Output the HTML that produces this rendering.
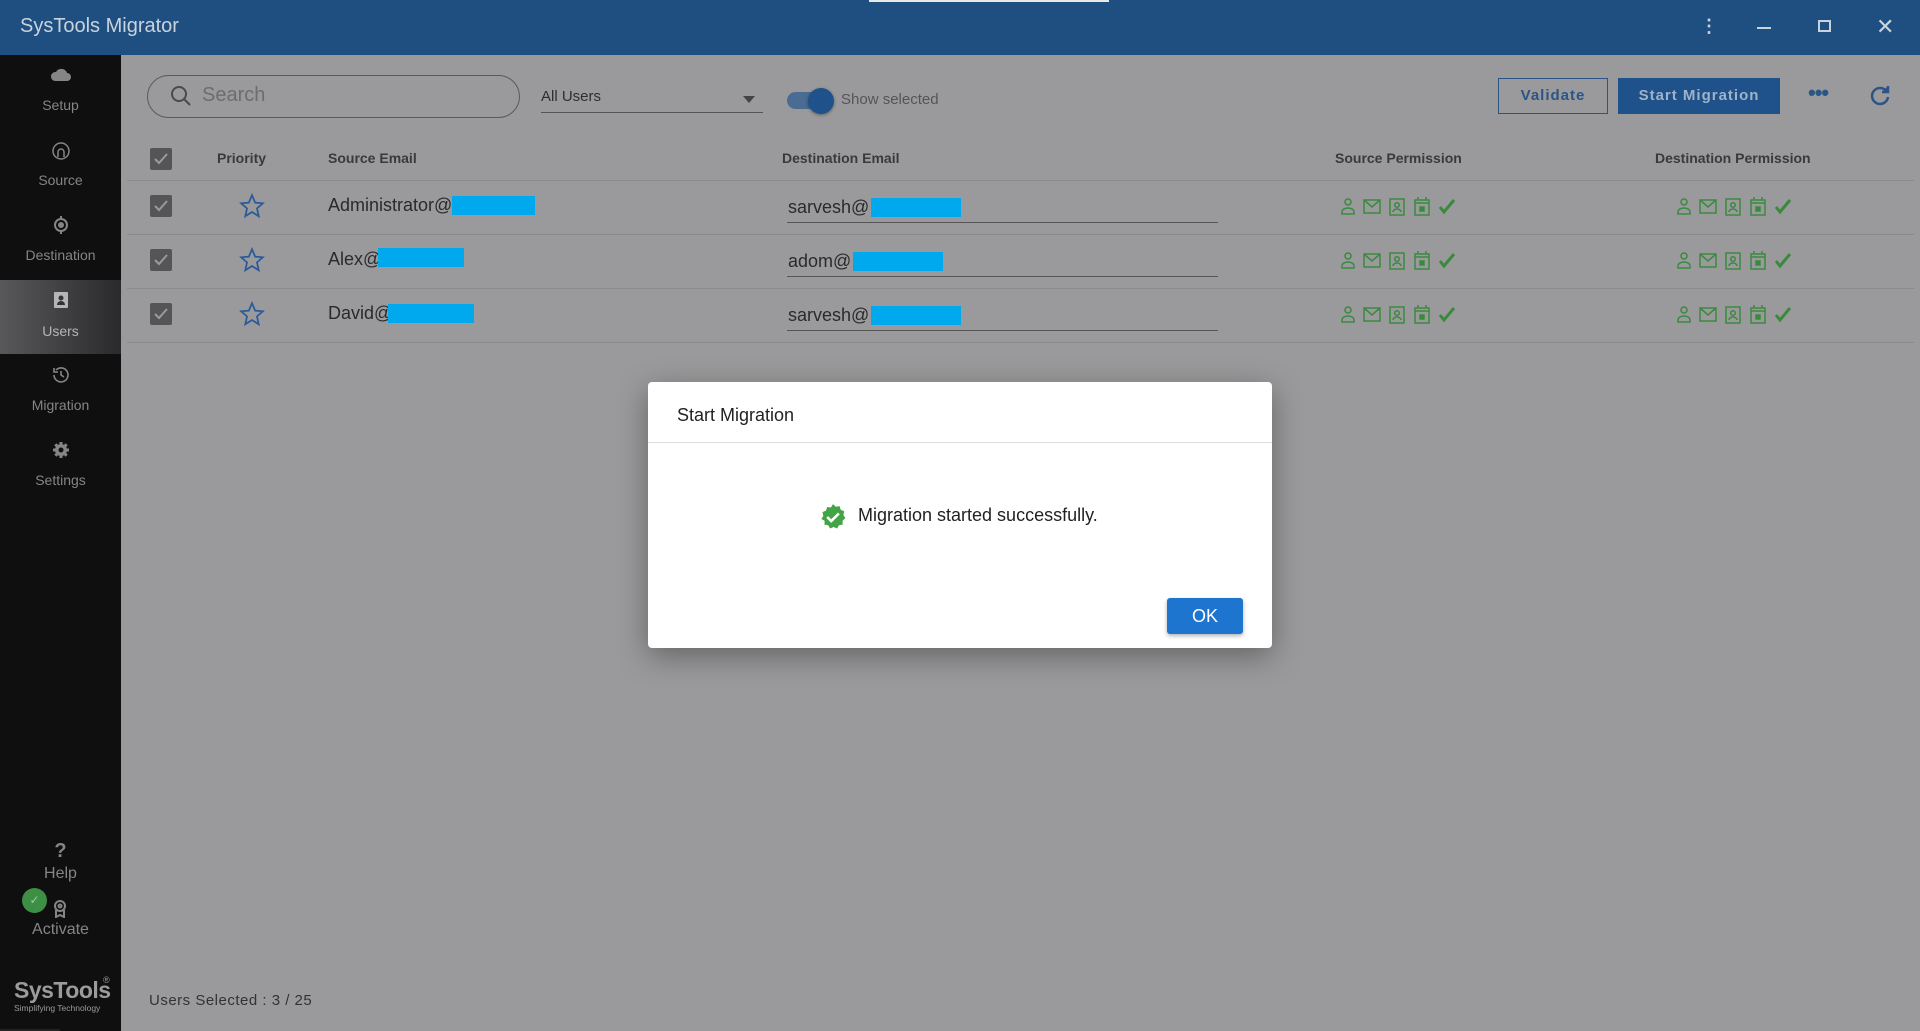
<!DOCTYPE html>
<html><head><meta charset="utf-8"><style>
*{margin:0;padding:0;box-sizing:border-box}
body{width:1920px;height:1031px;overflow:hidden;background:#9a999b;font-family:"Liberation Sans",sans-serif;position:relative;color:#2e2e30}
.abs{position:absolute}
#top{left:0;top:0;width:1920px;height:55px;background:#1f4e80}
#side{left:0;top:55px;width:121px;height:976px;background:#0f0f10}
.si{position:absolute;left:0;width:121px;text-align:center;color:#858587;font-size:14px}
.hdr{position:absolute;top:150px;font-size:14px;font-weight:bold;color:#3a3a3c}
.line{position:absolute;left:127px;width:1787px;height:1px;background:#8a898b}
.cb{position:absolute;left:150px;width:22px;height:22px;background:#555557;border-radius:2px}
.cb svg{position:absolute;left:3px;top:3px}
.em{position:absolute;font-size:18px;color:#2a2a2c}
.bl{position:absolute;background:#00a9ee;height:19px}
.ul{position:absolute;left:787px;width:431px;height:1px;background:#555}
</style></head><body>
<div id="top" class="abs"></div>
<div class="abs" style="left:869px;top:0;width:240px;height:2px;background:#e8e8e8"></div>
<div class="abs" style="left:20px;top:15px;font-size:20px;color:#c9d3de">SysTools Migrator</div>
<div class="abs" style="left:1700px;top:16px;color:#c9d3de;font-size:18px;font-weight:bold">⋮</div>
<div class="abs" style="left:1757px;top:27px;width:14px;height:2px;background:#c9d3de"></div>
<div class="abs" style="left:1818px;top:20px;width:13px;height:12px;border:2px solid #c9d3de"></div>
<div class="abs" style="left:1876px;top:14px;color:#c9d3de;font-size:22px">✕</div>

<div id="side" class="abs"></div>
<div class="abs" style="left:0;top:280px;width:121px;height:74px;background:linear-gradient(90deg,#58585a,#2a2a2c)"></div>
<div class="si" style="top:66px"><svg width="22" height="16" viewBox="0 0 22 16"><path d="M5 15h12a4 4 0 0 0 0-8 6 6 0 0 0-11-1 4.5 4.5 0 0 0-1 9z" fill="#858587"/></svg></div>
<div class="si" style="top:97px">Setup</div>
<div class="si" style="top:141px"><svg width="20" height="20" viewBox="0 0 20 20" fill="none" stroke="#858587" stroke-width="1.5"><circle cx="10" cy="10" r="8"/><path d="M7 16v-5a3 3 0 0 1 6 0v5"/></svg></div>
<div class="si" style="top:172px">Source</div>
<div class="si" style="top:215px"><svg width="20" height="20" viewBox="0 0 20 20"><circle cx="10" cy="10" r="6" fill="none" stroke="#858587" stroke-width="2"/><circle cx="10" cy="10" r="3" fill="#858587"/><path d="M10 1v3M10 16v3" stroke="#858587" stroke-width="2"/></svg></div>
<div class="si" style="top:247px">Destination</div>
<div class="si" style="top:291px"><svg width="16" height="18" viewBox="0 0 16 18"><rect x="1" y="1" width="14" height="16" rx="1" fill="#b5b5b7"/><circle cx="8" cy="7" r="2.5" fill="#333"/><path d="M4 14a4 4 0 0 1 8 0z" fill="#333"/></svg></div>
<div class="si" style="top:323px;color:#b5b5b7">Users</div>
<div class="si" style="top:365px"><svg width="20" height="20" viewBox="0 0 20 20" fill="none" stroke="#858587" stroke-width="1.6"><path d="M3 10a7 7 0 1 0 2-5"/><path d="M3 3v4h4"/><path d="M10 6v4l3 2"/></svg></div>
<div class="si" style="top:397px">Migration</div>
<div class="si" style="top:440px"><svg width="20" height="20" viewBox="0 0 20 20"><circle cx="10" cy="10" r="6" fill="#858587"/><path d="M10 2v16M2 10h16M4.3 4.3l11.4 11.4M15.7 4.3L4.3 15.7" stroke="#858587" stroke-width="3"/><circle cx="10" cy="10" r="2.5" fill="#0f0f10"/></svg></div>
<div class="si" style="top:472px">Settings</div>
<div class="si" style="top:840px;font-size:20px;font-weight:bold">?</div>
<div class="si" style="top:865px;font-size:16px">Help</div>
<div class="abs" style="left:22px;top:888px;width:25px;height:25px;border-radius:50%;background:#3d8f45;color:#9bd0a0;font-size:12px;text-align:center;line-height:25px">✓</div>
<div class="abs" style="left:53px;top:900px"><svg width="14" height="18" viewBox="0 0 14 18" fill="none" stroke="#858587" stroke-width="2"><circle cx="7" cy="6" r="5"/><circle cx="7" cy="6" r="1.5"/><path d="M3 10v7l4-2 4 2v-7"/></svg></div>
<div class="si" style="top:921px;font-size:16px">Activate</div>
<div class="abs" style="left:14px;top:977px;font-size:23px;font-weight:bold;color:#9b9b9d;letter-spacing:-0.5px">SysTools</div>
<div class="abs" style="left:103px;top:975px;font-size:9px;color:#9b9b9d">®</div>
<div class="abs" style="left:14px;top:1003px;font-size:8.5px;color:#9b9b9d">Simplifying Technology</div>

<div class="abs" style="left:147px;top:75px;width:373px;height:43px;border:1.5px solid #5a5a5c;border-radius:22px"></div>
<div class="abs" style="left:170px;top:85px"><svg width="22" height="22" viewBox="0 0 22 22" fill="none" stroke="#4a4a4c" stroke-width="2"><circle cx="9" cy="9" r="7"/><path d="M14 14l6 6"/></svg></div>
<div class="abs" style="left:202px;top:84px;font-size:20px;color:#6d6d6f">Search</div>
<div class="abs" style="left:541px;top:88px;font-size:15px;color:#2e2e30">All Users</div>
<div class="abs" style="left:743px;top:96px;width:0;height:0;border-left:6px solid transparent;border-right:6px solid transparent;border-top:7px solid #444"></div>
<div class="abs" style="left:541px;top:112px;width:222px;height:1px;background:#555"></div>
<div class="abs" style="left:787px;top:92px;width:44px;height:17px;border-radius:9px;background:#4a6c92"></div>
<div class="abs" style="left:808px;top:88px;width:26px;height:26px;border-radius:50%;background:#1f528a;box-shadow:0 1px 3px rgba(0,0,0,.4)"></div>
<div class="abs" style="left:841px;top:91px;font-size:15px;color:#555557">Show selected</div>
<div class="abs" style="left:1498px;top:78px;width:110px;height:36px;border:1.5px solid #2a5585;color:#2a5585;font-size:15px;font-weight:bold;text-align:center;line-height:33px;letter-spacing:1px">Validate</div>
<div class="abs" style="left:1618px;top:78px;width:162px;height:36px;background:#1f528a;color:#9fb3c8;font-size:15px;font-weight:bold;text-align:center;line-height:36px;letter-spacing:1px">Start Migration</div>
<div class="abs" style="left:1808px;top:80px;font-size:22px;color:#2a5585;font-weight:bold;letter-spacing:-1px">•••</div>
<div class="abs" style="left:1869px;top:84px"><svg width="22" height="22" viewBox="0 0 22 22" fill="none" stroke="#2a5585" stroke-width="2.5"><path d="M18 8a8 8 0 1 0 1 5"/><path d="M19 2v6h-6" fill="#2a5585"/></svg></div>

<div class="cb" style="top:148px"><svg width="16" height="16" viewBox="0 0 16 16"><path d="M2 8l4 4 8-9" fill="none" stroke="#9a999b" stroke-width="2"/></svg></div>
<div class="hdr" style="left:217px">Priority</div>
<div class="hdr" style="left:328px">Source Email</div>
<div class="hdr" style="left:782px">Destination Email</div>
<div class="hdr" style="left:1335px">Source Permission</div>
<div class="hdr" style="left:1655px">Destination Permission</div>
<div class="line" style="top:180px"></div>
<div class="line" style="top:234px"></div>
<div class="line" style="top:288px"></div>
<div class="line" style="top:342px"></div>

<div class="cb" style="top:195px"><svg width="16" height="16" viewBox="0 0 16 16"><path d="M2 8l4 4 8-9" fill="none" stroke="#9a999b" stroke-width="2"/></svg></div>
<div class="cb" style="top:249px"><svg width="16" height="16" viewBox="0 0 16 16"><path d="M2 8l4 4 8-9" fill="none" stroke="#9a999b" stroke-width="2"/></svg></div>
<div class="cb" style="top:303px"><svg width="16" height="16" viewBox="0 0 16 16"><path d="M2 8l4 4 8-9" fill="none" stroke="#9a999b" stroke-width="2"/></svg></div>
<svg class="abs" style="left:239px;top:193px" width="26" height="26" viewBox="0 0 24 24"><path d="M12 2l2.9 6.9 7.1.6-5.4 4.7 1.6 7.3L12 17.6 5.8 21.5l1.6-7.3L2 9.5l7.1-.6z" fill="none" stroke="#2a5a9a" stroke-width="1.6"/></svg>
<svg class="abs" style="left:239px;top:247px" width="26" height="26" viewBox="0 0 24 24"><path d="M12 2l2.9 6.9 7.1.6-5.4 4.7 1.6 7.3L12 17.6 5.8 21.5l1.6-7.3L2 9.5l7.1-.6z" fill="none" stroke="#2a5a9a" stroke-width="1.6"/></svg>
<svg class="abs" style="left:239px;top:301px" width="26" height="26" viewBox="0 0 24 24"><path d="M12 2l2.9 6.9 7.1.6-5.4 4.7 1.6 7.3L12 17.6 5.8 21.5l1.6-7.3L2 9.5l7.1-.6z" fill="none" stroke="#2a5a9a" stroke-width="1.6"/></svg>
<div class="em" style="left:328px;top:195px">Administrator@</div><div class="bl" style="left:452px;top:196px;width:83px"></div>
<div class="em" style="left:328px;top:249px">Alex@</div><div class="bl" style="left:378px;top:248px;width:86px"></div>
<div class="em" style="left:328px;top:303px">David@</div><div class="bl" style="left:388px;top:304px;width:86px"></div>
<div class="em" style="left:788px;top:197px">sarvesh@</div><div class="bl" style="left:871px;top:198px;width:90px"></div>
<div class="em" style="left:788px;top:251px">adom@</div><div class="bl" style="left:853px;top:252px;width:90px"></div>
<div class="em" style="left:788px;top:305px">sarvesh@</div><div class="bl" style="left:871px;top:306px;width:90px"></div>
<div class="ul" style="top:222px"></div><div class="ul" style="top:276px"></div><div class="ul" style="top:330px"></div>

<svg width="0" height="0" style="position:absolute"><defs>
<g id="pi" fill="none" stroke="#3a8a3e" stroke-width="1.5">
<circle cx="8" cy="5" r="3"/><path d="M2 17v-2a6 4 0 0 1 12 0v2z"/>
<rect x="24" y="3" width="16" height="13"/><path d="M24 3l8 7 8-7"/>
<rect x="50" y="2" width="14" height="16"/><circle cx="57" cy="8" r="2.3"/><path d="M53 15a4 3 0 0 1 8 0"/>
<rect x="75" y="3" width="14" height="15"/><path d="M75 6h14M78 0v3M86 0v3"/><rect x="80" y="10" width="4" height="4" fill="#3a8a3e"/>
<path d="M100 10l4 5 10-12" stroke-width="3"/>
</g></defs></svg>
<svg class="abs" style="left:1340px;top:197px" width="120" height="20"><use href="#pi"/></svg>
<svg class="abs" style="left:1676px;top:197px" width="120" height="20"><use href="#pi"/></svg>
<svg class="abs" style="left:1340px;top:251px" width="120" height="20"><use href="#pi"/></svg>
<svg class="abs" style="left:1676px;top:251px" width="120" height="20"><use href="#pi"/></svg>
<svg class="abs" style="left:1340px;top:305px" width="120" height="20"><use href="#pi"/></svg>
<svg class="abs" style="left:1676px;top:305px" width="120" height="20"><use href="#pi"/></svg>

<div class="abs" style="left:149px;top:992px;font-size:15px;color:#333;letter-spacing:.5px">Users Selected : 3 / 25</div>
<div class="abs" style="left:0;top:1029px;width:60px;height:2px;background:#222"></div>

<!-- dialog -->
<div class="abs" style="left:648px;top:382px;width:624px;height:266px;background:#fff;border-radius:4px;box-shadow:0 8px 30px rgba(0,0,0,.35)"></div>
<div class="abs" style="left:677px;top:405px;font-size:18px;color:#222">Start Migration</div>
<div class="abs" style="left:648px;top:442px;width:624px;height:1px;background:#ddd"></div>
<svg class="abs" style="left:819px;top:503px" width="28" height="28" viewBox="0 0 24 24"><path d="M12 1l2.4 2.2 3.2-.5 1 3.1 3 1.3-.7 3.2 1.7 2.7-2.4 2.2.1 3.3-3.2.6-1.6 2.8-3-1.3-3 1.3-1.6-2.8-3.2-.6.1-3.3L2 13.7l1.7-2.7L3 7.8l3-1.3 1-3.1 3.2.5z" fill="#43a347"/><path d="M7 12l3.5 3.5L17 9" fill="none" stroke="#fff" stroke-width="2.2"/></svg>
<div class="abs" style="left:858px;top:505px;font-size:18px;color:#222">Migration started successfully.</div>
<div class="abs" style="left:1167px;top:598px;width:76px;height:36px;background:#1d75cf;border-radius:3px;color:#fff;font-size:18px;text-align:center;line-height:36px;box-shadow:0 2px 4px rgba(0,0,0,.3)">OK</div>
</body></html>
